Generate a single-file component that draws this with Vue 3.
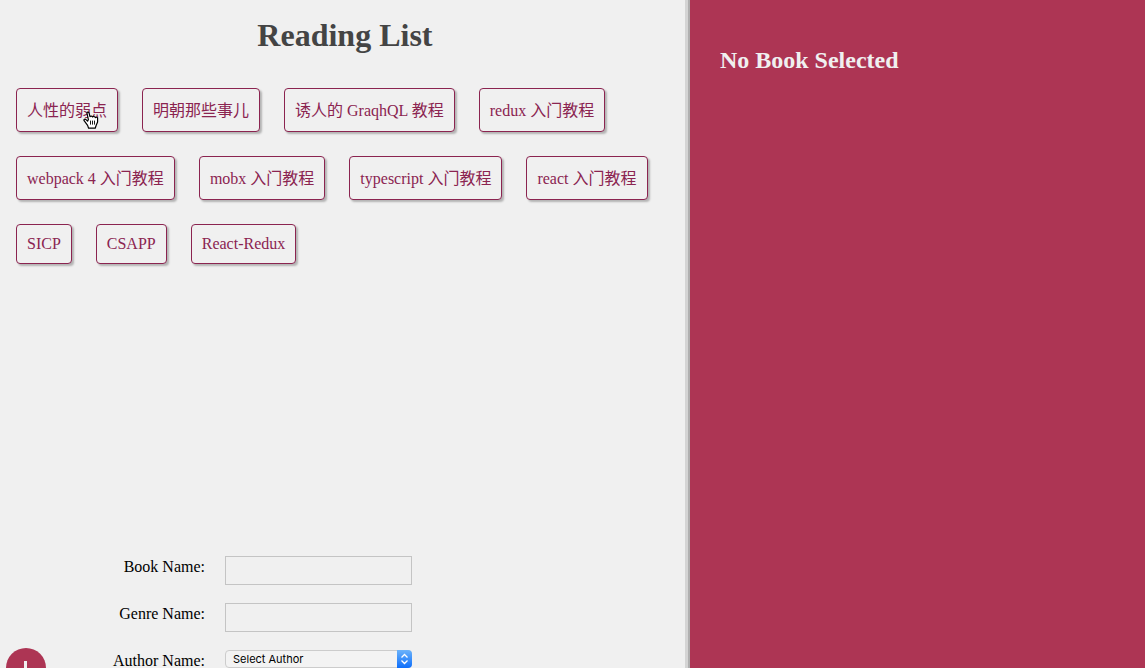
<script setup>
import { ref } from 'vue'

const books = [
  '人性的弱点',
  '明朝那些事儿',
  '诱人的 GraqhQL 教程',
  'redux 入门教程',
  'webpack 4 入门教程',
  'mobx 入门教程',
  'typescript 入门教程',
  'react 入门教程',
  'SICP',
  'CSAPP',
  'React-Redux',
]
const hasHan = (text) => /\p{Script=Han}/u.test(text)
const name = ref('')
const genre = ref('')
const author = ref('')
</script>

<template>
  <div class="page">
    <main class="main">
      <h1>Reading List</h1>
      <ul class="books">
        <li v-for="(book, i) in books" :key="book">
          <button type="button" class="book" :class="{ han: hasHan(book) }">{{ book }}</button>
          <svg v-if="i === 0" class="hand" viewBox="0 0 16 18" aria-hidden="true">
            <path d="M4.6 10.2 3 8.6C2 7.6.5 8.4 1.1 9.7L4.6 14.4 5.6 17.2H12.2L13.2 14.2 14.6 11V7C14.3 5.8 12.8 5.8 12.3 6.6 11.9 5.2 10.2 5.2 9.7 6 9.2 4.8 7.5 4.8 7 5.6L6 1.9C5.6.7 3.7 1 4 2.4L5.4 8.6Z" fill="#fff" stroke="#000" stroke-width="1.2" stroke-linejoin="round" />
            <path d="M7.5 9.6V13.6M9.5 9.6V13.6M11.5 9.6V13.6" fill="none" stroke="#000" stroke-width=".9" />
          </svg>
        </li>
      </ul>
      <form class="form" @submit.prevent>
        <div class="field">
          <label for="name">Book Name:</label>
          <input id="name" v-model="name" type="text" />
        </div>
        <div class="field">
          <label for="genre">Genre Name:</label>
          <input id="genre" v-model="genre" type="text" />
        </div>
        <div class="field">
          <label for="author">Author Name:</label>
          <div class="select">
            <select id="author" v-model="author">
              <option value="">Select Author</option>
            </select>
            <svg class="arrows" viewBox="0 0 15 18" aria-hidden="true">
              <path d="M4.5 7.5 7.5 4.5 10.5 7.5M4.5 10.5 7.5 13.5 10.5 10.5" fill="none" stroke="#fff" stroke-width="1.3" />
            </svg>
          </div>
        </div>
        <button type="submit" class="add" aria-label="Add book">
          <svg viewBox="0 0 40 40" aria-hidden="true">
            <path d="M19.5 13V29M11.5 21.5H27.5" stroke="#f0f0f0" stroke-width="3" />
          </svg>
        </button>
      </form>
    </main>
    <aside class="details">
      <h2>No Book Selected</h2>
    </aside>
  </div>
</template>

<style>
body {
  margin: 0;
  overflow: hidden;
}
</style>

<style scoped>
.page {
  display: flex;
  height: 100vh;
  overflow: hidden;
  background: #f0f0f0;
  font: 16px "Liberation Serif", "Noto Sans CJK SC", serif;
}
.main {
  position: relative;
  flex: 1;
  min-width: 0;
}
h1 {
  margin: 15px 0 0;
  text-align: center;
  font-size: 32px;
  line-height: 40px;
  color: #444;
}
.books {
  display: flex;
  flex-wrap: wrap;
  align-items: flex-start;
  gap: 24px;
  margin: 33px 16px 0;
  padding: 0;
  list-style: none;
}
.books li {
  position: relative;
}
.book {
  display: block;
  padding: 10px;
  border: 1px solid #8b2450;
  border-radius: 4px;
  background: #f0f0f0;
  box-shadow: 2px 2px 2px rgba(0, 0, 0, 0.25);
  color: #8b2450;
  font: inherit;
  line-height: 18px;
}
.book.han {
  padding: 11px 10px 9px;
  line-height: 22px;
}
.hand {
  position: absolute;
  left: 67px;
  top: 23px;
  width: 16px;
  height: 18px;
}
.form {
  position: absolute;
  left: 0;
  bottom: -22px;
  width: 412px;
}
.field {
  display: grid;
  grid-template-columns: 205px 1fr;
  column-gap: 20px;
  margin-bottom: 18px;
}
.field label {
  text-align: right;
  line-height: 22px;
}
.field input {
  box-sizing: border-box;
  width: 100%;
  height: 29px;
  border: 1px solid #c4c4c4;
  background: #f0f0f0;
}
.select {
  position: relative;
  height: 18px;
}
.select select {
  appearance: none;
  display: block;
  box-sizing: border-box;
  width: 100%;
  height: 18px;
  padding: 0 20px 0 7px;
  border: 1px solid #ccc;
  border-radius: 4px;
  background: #f3f3f3;
  color: #000;
  font: 11px Inter, sans-serif;
}
.arrows {
  position: absolute;
  right: 0;
  top: 0;
  width: 15px;
  height: 18px;
  border-radius: 0 4px 4px 0;
  background: linear-gradient(#6cb3fa, #0d6efb);
  pointer-events: none;
}
.add {
  position: absolute;
  left: 6px;
  bottom: 2px;
  width: 40px;
  height: 40px;
  padding: 0;
  border: 0;
  border-radius: 50%;
  background: #ad3554;
}
.add svg {
  display: block;
}
.details {
  position: relative;
  width: 39.75%;
  box-sizing: border-box;
  padding: 30px;
  background: #ad3554;
  box-shadow: -2px 0 #b0b0b0, -5px 0 #d4d4d4;
  color: #f0f0f0;
}
h2 {
  margin: 16px 0;
  font-size: 24px;
  line-height: 28px;
}
</style>
